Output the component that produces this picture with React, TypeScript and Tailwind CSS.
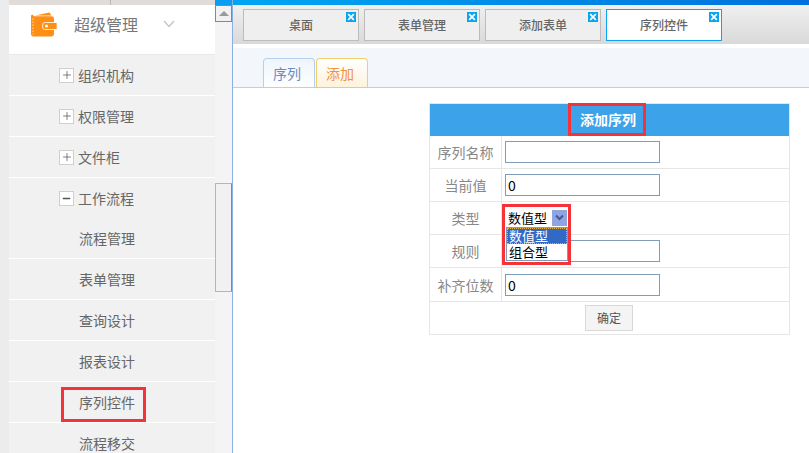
import type { ReactNode } from "react"
import { Minus, Plus } from "lucide-react"

const font = { fontFamily: '"Noto Sans CJK SC", "Liberation Sans", sans-serif' }

const menuGroups = ["组织机构", "权限管理", "文件柜"]
const subItems = ["流程管理", "表单管理", "查询设计", "报表设计", "序列控件", "流程移交"]
const topTabs = ["桌面", "表单管理", "添加表单", "序列控件"]

function WalletIcon() {
  return (
    <svg width="27" height="25" viewBox="0 0 27 25" className="shrink-0">
      <path d="M5 3.4 L19.5 0.6 L21.5 3.4 Z" fill="#ff8e14" />
      <path d="M1 4 Q1 2.5 2.5 2.5 L4 4.2 L21.5 4.2 Q24 4.2 24 6.5 L24 22 Q24 24.4 21.5 24.4 L3 24.4 Q1 24.4 1 22 Z" fill="#ff8e14" />
      <path d="M14.5 10.5 L27 10.5 L27 17.5 L14.5 17.5 Q12.5 17.5 12.5 14 Q12.5 10.5 14.5 10.5 Z" fill="#ff8e14" stroke="#fff" strokeWidth="0.8" />
      <circle cx="16.5" cy="14" r="1.5" fill="#fff" />
      <path d="M3 6.5 V22.5" stroke="#ffd9a8" strokeWidth="1" strokeDasharray="1.5 1.5" />
    </svg>
  )
}

function ToggleBox({ open }: { open?: boolean }) {
  return (
    <span className="flex h-[15px] w-[15px] shrink-0 items-center justify-center border border-[#cfcfcf] bg-white text-[#555]">
      {open ? <Minus size={11} strokeWidth={3} /> : <Plus size={12} strokeWidth={1.5} />}
    </span>
  )
}

function CloseBadge() {
  return (
    <span className="absolute right-[2px] top-[2px] flex h-[10px] w-[10px] items-center justify-center bg-[#0aa5f0]">
      <svg width="8" height="8" viewBox="0 0 8 8">
        <path d="M1.2 1.2 L6.8 6.8 M6.8 1.2 L1.2 6.8" stroke="#fff" strokeWidth="1.7" />
      </svg>
    </span>
  )
}

function Sidebar() {
  return (
    <div className="flex h-full w-[233px] shrink-0 bg-[#ececec]">
      <div className="ml-[9px] flex w-[206px] flex-col bg-[#f1f1f1]">
        <div className="h-[5px] shrink-0 bg-[#e2dcd9]">
          <div className="h-full w-[102px] border-r border-[#bdb8b5]" />
        </div>
        <div className="flex h-[50px] shrink-0 items-center border-b border-[#e8e8e8] bg-white pb-[11px] pl-[21px]">
          <WalletIcon />
          <span className="ml-[17px] text-base leading-none text-[#777]">超级管理</span>
          <svg width="12" height="8" viewBox="0 0 12 8" className="ml-[25px]">
            <path d="M1 1 L6 6.5 L11 1" fill="none" stroke="#c4c4c4" strokeWidth="1.4" />
          </svg>
        </div>
        {menuGroups.map((name) => (
          <div key={name} className="flex h-[41px] shrink-0 items-center border-b border-white pl-[50px] text-sm text-[#666]">
            <ToggleBox />
            <span className="ml-[4px]">{name}</span>
          </div>
        ))}
        <div className="flex h-[40px] shrink-0 items-center pl-[50px] text-sm text-[#666]">
          <ToggleBox open />
          <span className="ml-[4px]">工作流程</span>
        </div>
        {subItems.map((name) => (
          <div key={name} className="relative flex h-[41px] shrink-0 items-center border-b border-white pl-[70px] text-sm text-[#666]">
            {name}
            {name === "序列控件" && (
              <span className="absolute left-[52px] top-[5px] h-[35px] w-[85px] border-[3px] border-[#f53237]" />
            )}
          </div>
        ))}
      </div>
      <div className="flex w-[17px] shrink-0 flex-col bg-[#f4f4f4]">
        <div className="h-[5px] shrink-0 bg-[#0a9cf0]" />
        <div className="flex h-[17px] shrink-0 items-center justify-center border border-[#888] bg-[#f1f1f1]">
          <span className="h-0 w-0 border-x-[5px] border-b-[5px] border-x-transparent border-b-[#999]" />
        </div>
        <div className="mt-[161px] h-[109px] shrink-0 border border-[#b5b5b5] border-r-[#888] bg-[#f1f1f1]" />
      </div>
      <div className="w-px shrink-0 bg-[#8ab0e6]" />
    </div>
  )
}

function TabBar() {
  return (
    <div className="flex h-[39px] shrink-0 gap-[5px] bg-gradient-to-b from-[#f0f0f0] to-[#d9d9d9] pl-[10px] pt-[4px]">
      {topTabs.map((name, i) => (
        <div
          key={name}
          className={
            i === 3
              ? "relative flex h-[32px] w-[116px] items-center justify-center border border-[#0aa5f0] bg-white text-xs font-medium text-[#666]"
              : "relative flex h-[32px] w-[116px] items-center justify-center border border-[#bcbcbc] bg-[#efefef] text-xs font-medium text-[#666]"
          }
        >
          {name}
          <CloseBadge />
        </div>
      ))}
    </div>
  )
}

function SubTabs() {
  return (
    <div className="mt-[4px] flex h-[40px] shrink-0 items-end gap-px border-b border-[#bccde4] bg-[#f3f6fb] pl-[30px]">
      <div className="flex h-[29px] w-[52px] items-center justify-center rounded-t-[4px] border border-b-0 border-[#b3d2ee] bg-gradient-to-b from-[#eef5fb] to-white pr-[4px] text-sm text-[#6a8ac4]">
        序列
      </div>
      <div className="flex h-[29px] w-[52px] items-center justify-center rounded-t-[4px] border border-b-0 border-[#f3cf6b] bg-gradient-to-b from-white to-[#fdf3dd] pr-[4px] text-sm text-[#f0903a]">
        添加
      </div>
    </div>
  )
}

function FormRow({ label, children, tall }: { label: string; children: ReactNode; tall?: boolean }) {
  return (
    <div className={tall ? "flex h-[34px] border-b border-[#e6e6e6]" : "flex h-[33px] border-b border-[#e6e6e6]"}>
      <div className="flex w-[72px] shrink-0 items-center justify-center border-r border-[#e6e6e6] text-sm text-[#888]">
        {label}
      </div>
      <div className="flex flex-1 items-center pl-[3px]">{children}</div>
    </div>
  )
}

function TextBox({ value }: { value?: string }) {
  return (
    <input
      readOnly
      value={value ?? ""}
      className="h-[22px] w-[155px] border border-[#7f9db9] bg-white px-[2px] text-sm leading-none text-black outline-none"
    />
  )
}

function TypeSelect() {
  return (
    <div className="relative h-[22px] w-[155px]">
      <div className="absolute -left-[3px] -top-[3px] z-10 h-[61px] w-[69px] border-[3px] border-[#f53237] bg-white">
        <div className="flex h-[20px] items-center justify-between pl-[3px] pr-[1px] pt-[1px] text-[13px] text-black">
          <span className="leading-[16px]">数值型</span>
          <span className="flex h-[16px] w-[15px] items-center justify-center border border-[#8fa6dc] bg-[#8ea4e4]">
            <svg width="9" height="7" viewBox="0 0 9 7">
              <path d="M1 1.5 L4.5 5 L8 1.5" fill="none" stroke="#44598c" strokeWidth="2" />
            </svg>
          </span>
        </div>
        <div className="ml-px flex h-[34px] w-[62px] flex-col border border-[#7f9db9] bg-white text-[13px] text-black">
          <div className="h-[16px] border border-dotted border-[#e8b34c] bg-[#316ac5] pl-px leading-[14px] text-white">数值型</div>
          <div className="h-[16px] pl-[2px] leading-[16px]">组合型</div>
        </div>
      </div>
    </div>
  )
}

function AddSequenceForm() {
  return (
    <div className="ml-[196px] mt-[15px] w-[361px] border border-[#e6e6e6]">
      <div className="flex h-[32px] items-center justify-center bg-[#3ca2e9]">
        <span className="-mt-[2px] ml-[-5px] flex h-[33px] w-[78px] items-center justify-center border-[3px] border-[#f53237] pl-[2px] text-sm font-bold text-white">
          添加序列
        </span>
      </div>
      <FormRow label="序列名称"><TextBox /></FormRow>
      <FormRow label="当前值"><TextBox value="0" /></FormRow>
      <FormRow label="类型"><TypeSelect /></FormRow>
      <FormRow label="规则"><TextBox /></FormRow>
      <FormRow label="补齐位数" tall><TextBox value="0" /></FormRow>
      <div className="flex h-[32px] items-center justify-center pr-px">
        <button className="flex h-[26px] w-[48px] items-center justify-center border border-[#d8d8d8] bg-[#f4f4f4] text-xs text-[#555]">
          确定
        </button>
      </div>
    </div>
  )
}

export default function App() {
  return (
    <div className="flex h-[453px] w-[809px] overflow-hidden bg-white" style={font}>
      <Sidebar />
      <div className="flex min-w-0 flex-1 flex-col">
        <div className="h-[5px] shrink-0 bg-gradient-to-r from-[#00a6f2] to-[#0070dc]" />
        <TabBar />
        <SubTabs />
        <AddSequenceForm />
      </div>
    </div>
  )
}
